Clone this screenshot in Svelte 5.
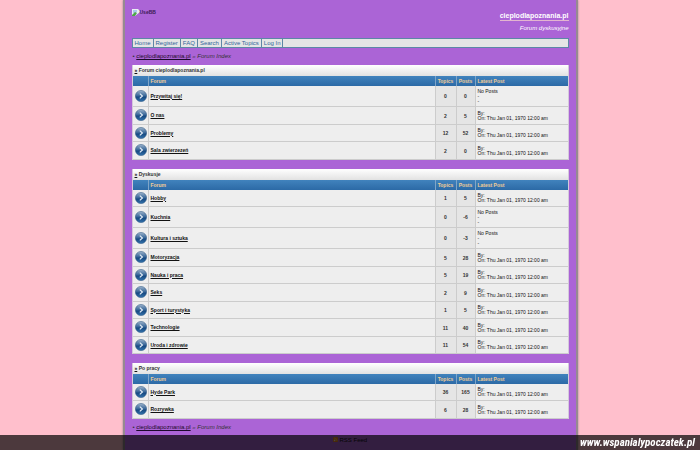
<script>
    const dated = ['By:', 'On: Thu Jan 01, 1970 12:00 am'];
    const none = ['No Posts', '-', '-'];

    let menu = ['Home', 'Register', 'FAQ', 'Search', 'Active Topics', 'Log In'];

    let categories = [
        {
            title: 'Forum cieplodlapoznania.pl',
            forums: [
                { name: 'Przywitaj się!', topics: 0, posts: 0, latest: none },
                { name: 'O nas', topics: 2, posts: 5, latest: dated },
                { name: 'Problemy', topics: 12, posts: 52, latest: dated },
                { name: 'Sala zwierzezeń', topics: 2, posts: 0, latest: dated }
            ]
        },
        {
            title: 'Dyskusje',
            forums: [
                { name: 'Hobby', topics: 1, posts: 5, latest: dated },
                { name: 'Kuchnia', topics: 0, posts: -6, latest: none },
                { name: 'Kultura i sztuka', topics: 0, posts: -3, latest: none },
                { name: 'Motoryzacja', topics: 5, posts: 28, latest: dated },
                { name: 'Nauka i praca', topics: 5, posts: 19, latest: dated },
                { name: 'Seks', topics: 2, posts: 9, latest: dated },
                { name: 'Sport i turystyka', topics: 1, posts: 5, latest: dated },
                { name: 'Technologie', topics: 11, posts: 40, latest: dated },
                { name: 'Uroda i zdrowie', topics: 11, posts: 54, latest: dated }
            ]
        },
        {
            title: 'Po pracy',
            forums: [
                { name: 'Hyde Park', topics: 36, posts: 165, latest: dated },
                { name: 'Rozrywka', topics: 6, posts: 28, latest: dated }
            ]
        }
    ];
</script>

{#snippet crumbs()}
    <p class="crumbs">• <a href="#home">cieplodlapoznania.pl</a> <em>» Forum Index</em></p>
{/snippet}

<div class="page">
    <header>
        <a class="logo" href="#home">
            <svg width="8" height="7" viewBox="0 0 8 7" aria-hidden="true">
                <path d="M0 0H6L8 2V7H0Z" fill="#e8eef4" />
                <path d="M1 1H5V3L3 4L1 4Z" fill="#a9c8ee" />
                <path d="M0 6L3 3L5 4L3 7H0Z" fill="#4fa64a" />
                <path d="M3 7L8 3V7Z" fill="#ab64d6" />
            </svg>UseBB</a>
        <div class="site">
            <h1>cieplodlapoznania.pl</h1>
            <p>Forum dyskusyjne</p>
        </div>
    </header>

    <nav>
        {#each menu as item}
            <a href="#menu">{item}</a>
        {/each}
    </nav>

    {@render crumbs()}

    {#each categories as category}
        <section>
            <h2><a href="#category">»</a> {category.title}</h2>
            <table>
                <thead>
                    <tr>
                        <th class="icon"></th>
                        <th>Forum</th>
                        <th class="topics">Topics</th>
                        <th class="posts">Posts</th>
                        <th class="latest">Latest Post</th>
                    </tr>
                </thead>
                <tbody>
                    {#each category.forums as forum}
                        <tr class:tall={forum.latest.length > 2}>
                            <td class="icon">
                                <svg width="12" height="12" viewBox="0 0 12 12" aria-hidden="true">
                                    <defs>
                                        <linearGradient id="ball" x1="0" y1="0" x2="0" y2="1">
                                            <stop offset="0" stop-color="#9db4cc" />
                                            <stop offset="0.45" stop-color="#3f6c9c" />
                                            <stop offset="0.6" stop-color="#174a82" />
                                            <stop offset="1" stop-color="#3474ae" />
                                        </linearGradient>
                                    </defs>
                                    <circle cx="6" cy="6" r="5.6" fill="url(#ball)" stroke="#24507f" stroke-width="0.5" />
                                    <path d="M4.8 3.6L7.4 6L4.8 8.4" fill="none" stroke="#e4edf6" stroke-width="1.2" />
                                </svg>
                            </td>
                            <td class="name"><a href="#forum">{forum.name}</a></td>
                            <td class="count">{forum.topics}</td>
                            <td class="count">{forum.posts}</td>
                            <td class="last">
                                {#each forum.latest as line}
                                    <div>{line}</div>
                                {/each}
                            </td>
                        </tr>
                    {/each}
                </tbody>
            </table>
        </section>
    {/each}

    {@render crumbs()}

    <p class="rss">
        <svg width="5" height="5" viewBox="0 0 5 5" aria-hidden="true">
            <rect width="5" height="5" rx="1" fill="#f08a1c" />
            <circle cx="1.4" cy="3.6" r="0.6" fill="#fff" />
            <path d="M1 2.2A1.8 1.8 0 0 1 2.8 4M1 0.9A3.1 3.1 0 0 1 4.1 4" fill="none" stroke="#fff" stroke-width="0.3" />
        </svg>
        <a href="#rss">RSS Feed</a>
    </p>
</div>

<footer>www.wspanialypoczatek.pl</footer>

<style>
    :global(body) {
        background: #ffbfcc;
        overflow: hidden;
        font-family: "Liberation Sans", Arial, sans-serif;
        font-size: 6px;
        color: #333;
    }

    h1, h2, p {
        margin: 0;
    }

    .page {
        box-sizing: border-box;
        width: 65%;
        min-height: 100vh;
        margin: 0 auto;
        padding: 0 7px;
        background: #ab64d6;
        border: solid #968a90;
        border-width: 0 2px;
        box-shadow: 0 0 2px #968a90;
    }

    header {
        display: flex;
        justify-content: space-between;
        height: 38px;
    }

    .logo {
        display: flex;
        align-items: flex-start;
        padding-top: 9px;
        font-size: 5px;
        line-height: 7px;
        font-weight: bold;
        color: #3a1a55;
        text-decoration: none;
    }

    .site {
        padding-top: 11px;
        text-align: right;
        color: #fff;
    }

    .site h1 {
        font-size: 7px;
        line-height: 9px;
        border-bottom: 1px solid #e3b5cf;
    }

    .site p {
        padding-top: 3px;
        font-style: italic;
        line-height: 8px;
    }

    nav {
        display: flex;
        background: #e5e5e5;
        border: 1px solid #5d87a6;
        line-height: 8px;
    }

    nav a {
        padding: 0 2px;
        border-right: 1px solid #5d87a6;
        color: #336699;
        text-decoration: none;
    }

    .crumbs {
        padding: 4px 1px 5px;
        line-height: 8px;
    }

    .crumbs a {
        color: #1c0a2c;
    }

    section {
        margin-bottom: 9px;
        border: solid #d5c9dc;
        border-width: 0 1px;
    }

    section:last-of-type {
        margin-bottom: 0;
    }

    h2 {
        padding: 0 2px;
        background: linear-gradient(#fff, #e2e2e2);
        font-size: 5px;
        line-height: 11px;
    }

    h2 a {
        color: #111;
    }

    table {
        width: 100%;
        table-layout: fixed;
        border-spacing: 0;
    }

    th {
        height: 10px;
        padding: 0 2px;
        background: linear-gradient(#4183bd, #2c6aa6);
        border-right: 1px solid #7fa5c8;
        box-sizing: border-box;
        font-size: 5px;
        line-height: 9px;
        text-align: left;
        color: #f0cd97;
    }

    .icon {
        width: 16px;
    }

    .topics {
        width: 21px;
        text-align: center;
    }

    .posts {
        width: 19px;
        text-align: center;
    }

    .latest {
        width: 92px;
    }

    td {
        box-sizing: border-box;
        height: 17px;
        padding: 0 2px;
        background: #eee;
        border-right: 1px solid #ccc;
        border-bottom: 1px solid #ccc;
    }

    tr:nth-child(even) td {
        height: 18px;
    }

    tr.tall td {
        height: 21px;
    }

    th:last-child,
    td:last-child {
        border-right: 0;
    }

    td.icon,
    td.name {
        padding-bottom: 1px;
    }

    td svg {
        display: block;
    }

    .name a {
        font-size: 5px;
        font-weight: bold;
        color: #111;
    }

    .count {
        background: #e5e5e5;
        font-size: 5px;
        font-weight: bold;
        text-align: center;
    }

    .last {
        font-size: 5px;
        line-height: 5px;
        color: #111;
    }

    .rss {
        text-align: center;
        line-height: 8px;
    }

    .rss a {
        color: #111;
        text-decoration: none;
    }

    footer {
        position: fixed;
        right: 0;
        bottom: 0;
        left: 0;
        padding-right: 5px;
        background: rgba(0, 0, 0, 0.7);
        font-family: "Roboto Condensed", "Liberation Sans Narrow", "Liberation Sans", sans-serif;
        font-size: 11px;
        font-weight: bold;
        font-style: italic;
        line-height: 15px;
        text-align: right;
        color: #fff;
    }
</style>
